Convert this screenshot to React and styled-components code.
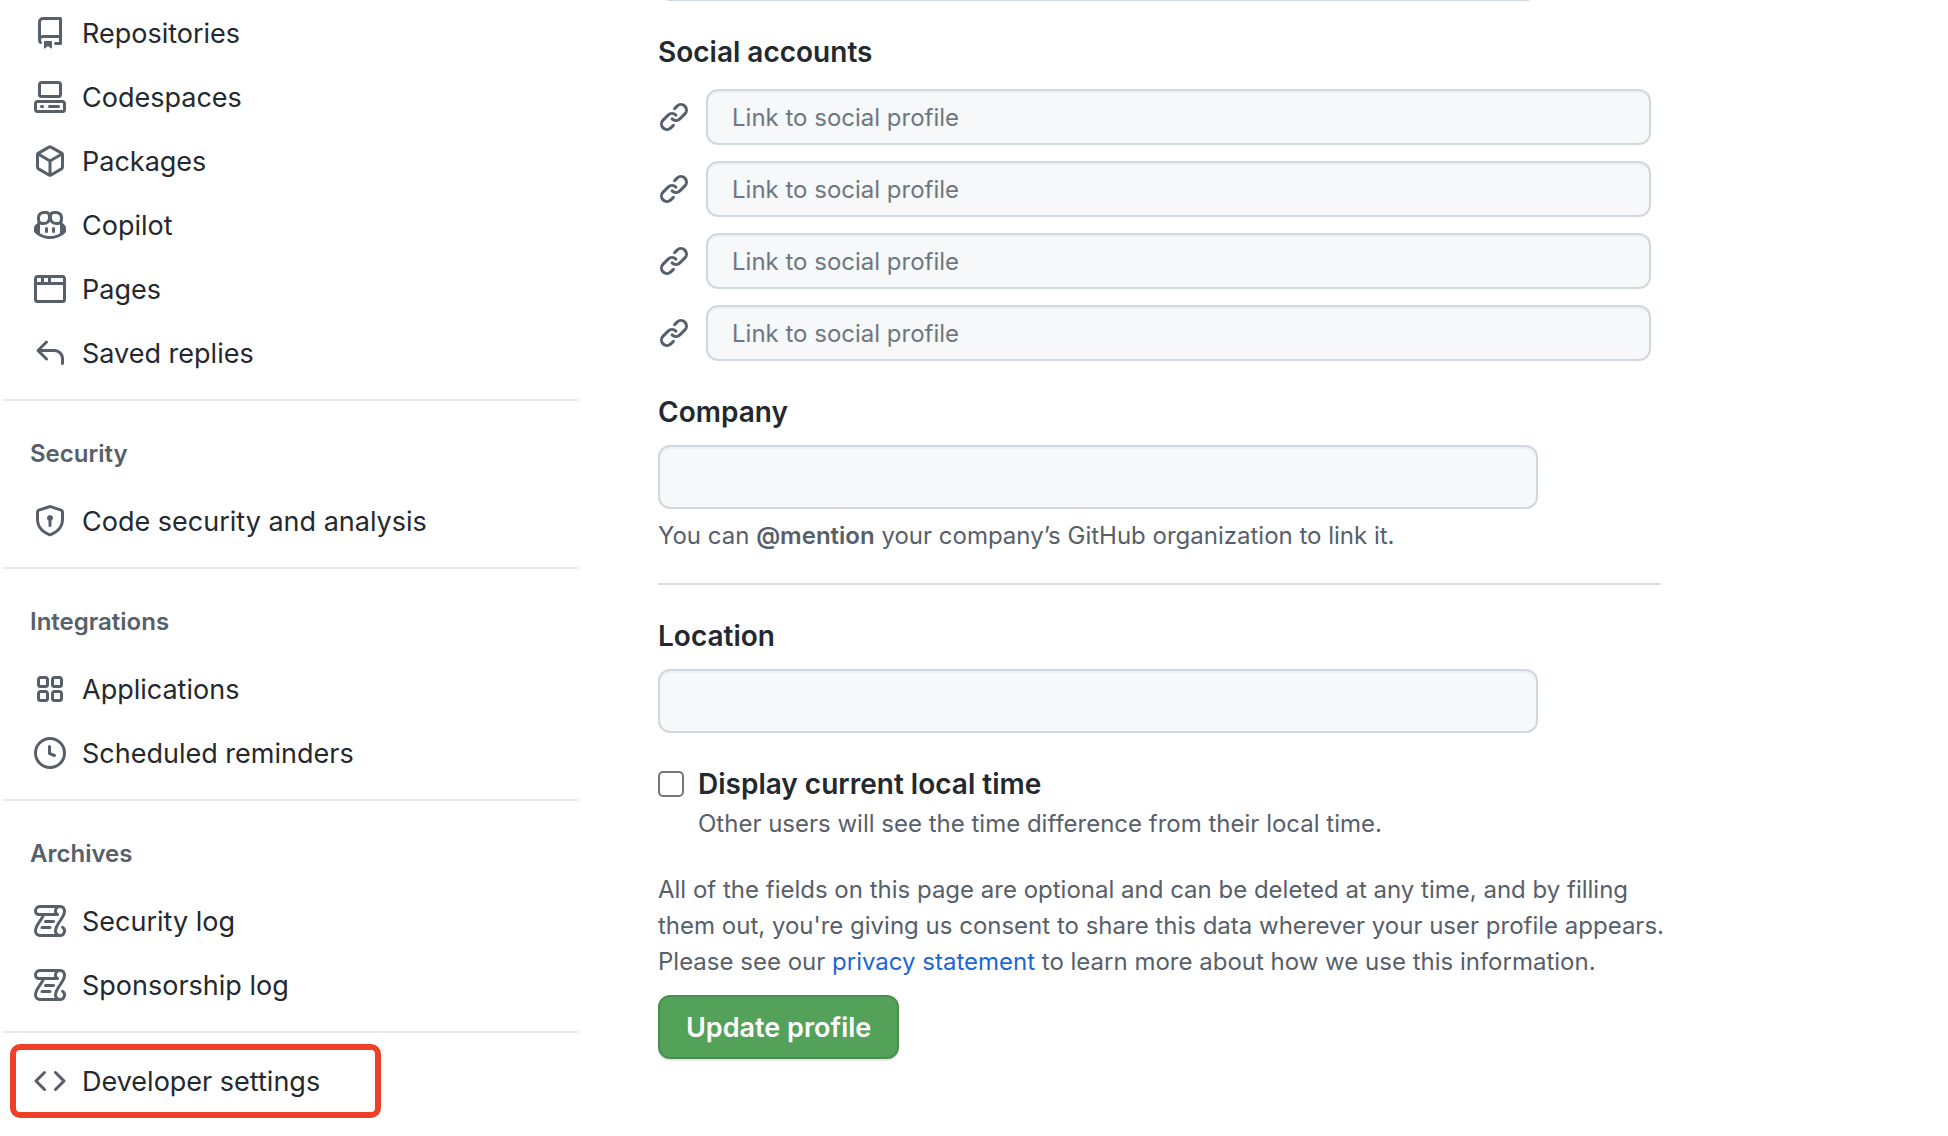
import React, { useId } from "react";
import styled, { createGlobalStyle, css } from "styled-components";

const color = {
  text: "#24292f",
  muted: "#57606a",
  placeholder: "#6e7781",
  link: "#1a66d8",
  border: "#d0d7de",
  divider: "#d8dee4",
  navDivider: "#e8ebef",
  field: "#f6f8fa",
  highlight: "#ee4026",
};

const GlobalStyle = createGlobalStyle`
  *, *::before, *::after { box-sizing: border-box; }
  body {
    margin: 0;
    overflow: hidden;
    background: #ffffff;
    color: ${color.text};
    font-family: Inter, "Liberation Sans", sans-serif;
    font-size: 27px;
    line-height: 40px;
  }
`;

const icons = {
  repo: "M2 2.5A2.5 2.5 0 0 1 4.5 0h8.75a.75.75 0 0 1 .75.75v12.5a.75.75 0 0 1-.75.75h-2.5a.75.75 0 0 1 0-1.5h1.75v-2h-8a1 1 0 0 0-.714 1.7.75.75 0 1 1-1.072 1.05A2.495 2.495 0 0 1 2 11.5Zm10.5-1h-8a1 1 0 0 0-1 1v6.708A2.486 2.486 0 0 1 4.5 9h8ZM5 12.25a.25.25 0 0 1 .25-.25h3.5a.25.25 0 0 1 .25.25v3.25a.25.25 0 0 1-.4.2l-1.45-1.087a.249.249 0 0 0-.3 0L5.4 15.7a.25.25 0 0 1-.4-.2Z",
  codespaces: "M0 11.25c0-.966.784-1.75 1.75-1.75h12.5c.966 0 1.75.784 1.75 1.75v3A1.75 1.75 0 0 1 14.25 16H1.75A1.75 1.75 0 0 1 0 14.25Zm2-9.5C2 .784 2.784 0 3.75 0h8.5C13.216 0 14 .784 14 1.75v5a1.75 1.75 0 0 1-1.75 1.75h-8.5A1.75 1.75 0 0 1 2 6.75Zm1.75-.25a.25.25 0 0 0-.25.25v5c0 .138.112.25.25.25h8.5a.25.25 0 0 0 .25-.25v-5a.25.25 0 0 0-.25-.25Zm-2 9.5a.25.25 0 0 0-.25.25v3c0 .138.112.25.25.25h12.5a.25.25 0 0 0 .25-.25v-3a.25.25 0 0 0-.25-.25ZM7 12.75a.75.75 0 0 1 .75-.75h4.5a.75.75 0 0 1 0 1.5h-4.5a.75.75 0 0 1-.75-.75Zm-4 0a.75.75 0 0 1 .75-.75h.5a.75.75 0 0 1 0 1.5h-.5a.75.75 0 0 1-.75-.75Z",
  package: "m8.878.392 5.25 3.045c.54.314.872.89.872 1.514v6.098a1.75 1.75 0 0 1-.872 1.514l-5.25 3.045a1.75 1.75 0 0 1-1.756 0l-5.25-3.045A1.75 1.75 0 0 1 1 11.049V4.951c0-.624.332-1.201.872-1.514L7.122.392a1.75 1.75 0 0 1 1.756 0ZM7.875 1.69l-4.63 2.685L8 7.133l4.755-2.758-4.63-2.685a.248.248 0 0 0-.25 0ZM2.5 5.677v5.372c0 .09.047.171.125.216l4.625 2.683V8.432Zm6.25 8.271 4.625-2.683a.25.25 0 0 0 .125-.216V5.677L8.75 8.432Z",
  copilot: "M7.998 15.035c-4.562 0-7.873-2.914-7.998-3.749V9.338c.085-.628.677-1.686 1.588-2.065.013-.07.024-.143.036-.218.029-.183.06-.384.126-.612-.201-.508-.254-1.084-.254-1.656 0-.87.128-1.769.693-2.484.579-.733 1.494-1.124 2.724-1.261 1.206-.134 2.262.034 2.944.765.05.053.096.108.139.165.044-.057.094-.112.143-.165.682-.731 1.738-.899 2.944-.765 1.23.137 2.145.528 2.724 1.261.566.715.693 1.614.693 2.484 0 .572-.053 1.148-.254 1.656.066.228.098.429.126.612.012.076.024.148.037.218.924.385 1.522 1.471 1.591 2.095v1.872c0 .766-3.351 3.795-8.002 3.795Zm0-1.485c2.28 0 4.584-1.11 5.002-1.433V7.862l-.023-.116c-.49.21-1.075.291-1.727.291-1.146 0-2.059-.327-2.71-.991A3.222 3.222 0 0 1 8 6.303a3.24 3.24 0 0 1-.544.743c-.65.664-1.563.991-2.71.991-.652 0-1.236-.081-1.727-.291l-.023.116v4.255c.419.323 2.722 1.433 5.002 1.433ZM6.762 2.83c-.193-.206-.637-.413-1.682-.297-1.019.113-1.479.404-1.713.7-.247.312-.369.789-.369 1.554 0 .793.129 1.171.308 1.371.162.181.519.379 1.442.379.853 0 1.339-.235 1.638-.54.315-.322.527-.827.617-1.553.117-.935-.037-1.395-.241-1.614Zm4.155-.297c-1.044-.116-1.488.091-1.681.297-.204.219-.359.679-.242 1.614.091.726.303 1.231.618 1.553.299.305.784.54 1.638.54.922 0 1.28-.198 1.442-.379.179-.2.308-.578.308-1.371 0-.765-.123-1.242-.37-1.554-.233-.296-.693-.587-1.713-.7ZM6.25 9.037a.75.75 0 0 1 .75.75v1.501a.75.75 0 0 1-1.5 0V9.787a.75.75 0 0 1 .75-.75Zm4.25.75v1.501a.75.75 0 0 1-1.5 0V9.787a.75.75 0 0 1 1.5 0Z",
  browser: "M0 2.75C0 1.784.784 1 1.75 1h12.5c.966 0 1.75.784 1.75 1.75v10.5A1.75 1.75 0 0 1 14.25 15H1.75A1.75 1.75 0 0 1 0 13.25ZM14.5 6h-13v7.25c0 .138.112.25.25.25h12.5a.25.25 0 0 0 .25-.25Zm-6-3.5v2h6V2.75a.25.25 0 0 0-.25-.25ZM5 2.5v2h2v-2Zm-3.25 0a.25.25 0 0 0-.25.25V4.5h2v-2Z",
  reply: "M6.78 1.97a.75.75 0 0 1 0 1.06L3.81 6h6.44A4.75 4.75 0 0 1 15 10.75v2.5a.75.75 0 0 1-1.5 0v-2.5a3.25 3.25 0 0 0-3.25-3.25H3.81l2.97 2.97a.749.749 0 0 1-.326 1.275.749.749 0 0 1-.734-.215L1.47 7.28a.75.75 0 0 1 0-1.06l4.25-4.25a.75.75 0 0 1 1.06 0Z",
  shield: "m8.533.133 5.25 1.68A1.75 1.75 0 0 1 15 3.48V7c0 1.566-.32 3.182-1.303 4.682-.983 1.498-2.585 2.813-5.032 3.855a1.697 1.697 0 0 1-1.33 0c-2.447-1.042-4.049-2.357-5.032-3.855C1.32 10.182 1 8.566 1 7V3.48a1.755 1.755 0 0 1 1.217-1.667l5.25-1.68a1.748 1.748 0 0 1 1.066 0Zm-.61 1.429.001.001-5.25 1.68a.251.251 0 0 0-.174.237V7c0 1.36.275 2.666 1.057 3.859.784 1.194 2.121 2.342 4.366 3.298a.196.196 0 0 0 .154 0c2.245-.957 3.582-2.103 4.366-3.297C13.225 9.666 13.5 8.358 13.5 7V3.48a.25.25 0 0 0-.174-.238l-5.25-1.68a.25.25 0 0 0-.153 0ZM9.5 6.5c0 .536-.286 1.032-.75 1.3v2.45a.75.75 0 0 1-1.5 0V7.8A1.5 1.5 0 1 1 9.5 6.5Z",
  apps: "M1.5 3.25c0-.966.784-1.75 1.75-1.75h2.5c.966 0 1.75.784 1.75 1.75v2.5A1.75 1.75 0 0 1 5.75 7.5h-2.5A1.75 1.75 0 0 1 1.5 5.75Zm7 0c0-.966.784-1.75 1.75-1.75h2.5c.966 0 1.75.784 1.75 1.75v2.5a1.75 1.75 0 0 1-1.75 1.75h-2.5A1.75 1.75 0 0 1 8.5 5.75Zm-7 7c0-.966.784-1.75 1.75-1.75h2.5c.966 0 1.75.784 1.75 1.75v2.5a1.75 1.75 0 0 1-1.75 1.75h-2.5a1.75 1.75 0 0 1-1.75-1.75Zm7 0c0-.966.784-1.75 1.75-1.75h2.5c.966 0 1.75.784 1.75 1.75v2.5a1.75 1.75 0 0 1-1.75 1.75h-2.5a1.75 1.75 0 0 1-1.75-1.75ZM3.25 3a.25.25 0 0 0-.25.25v2.5c0 .138.112.25.25.25h2.5A.25.25 0 0 0 6 5.75v-2.5A.25.25 0 0 0 5.75 3Zm7 0a.25.25 0 0 0-.25.25v2.5c0 .138.112.25.25.25h2.5a.25.25 0 0 0 .25-.25v-2.5a.25.25 0 0 0-.25-.25Zm-7 7a.25.25 0 0 0-.25.25v2.5c0 .138.112.25.25.25h2.5a.25.25 0 0 0 .25-.25v-2.5a.25.25 0 0 0-.25-.25Zm7 0a.25.25 0 0 0-.25.25v2.5c0 .138.112.25.25.25h2.5a.25.25 0 0 0 .25-.25v-2.5a.25.25 0 0 0-.25-.25Z",
  clock: "M8 0a8 8 0 1 1 0 16A8 8 0 0 1 8 0ZM1.5 8a6.5 6.5 0 1 0 13 0 6.5 6.5 0 0 0-13 0Zm7-3.25v2.992l2.028.812a.75.75 0 0 1-.557 1.392l-2.5-1A.751.751 0 0 1 7 8.25v-3.5a.75.75 0 0 1 1.5 0Z",
  log: "M5 8.25a.75.75 0 0 1 .75-.75h4a.75.75 0 0 1 0 1.5h-4A.75.75 0 0 1 5 8.25ZM4 10.5A.75.75 0 0 0 4 12h4a.75.75 0 0 0 0-1.5H4ZM13-.005c1.654 0 3 1.328 3 3 0 .982-.338 1.933-.783 2.818-.443.879-1.028 1.758-1.582 2.588l-.011.017c-.568.853-1.104 1.659-1.501 2.446-.398.789-.623 1.494-.623 2.136a1.5 1.5 0 1 0 2.333-1.248.75.75 0 0 1 .834-1.246A3 3 0 0 1 13 16H3a3 3 0 0 1-3-3c0-1.582.891-3.135 1.777-4.506.209-.322.418-.637.623-.946.473-.709.923-1.386 1.287-2.048H2.51c-.576 0-1.381-.133-1.907-.783A2.68 2.68 0 0 1 0 2.995a3 3 0 0 1 3-3Zm0 1.5a1.5 1.5 0 0 0-1.5 1.5c0 .476.223.834.667 1.132A.75.75 0 0 1 11.75 5.5H5.368c-.467 1.003-1.141 2.015-1.773 2.963-.192.289-.381.571-.558.845C2.13 10.711 1.5 11.916 1.5 13A1.5 1.5 0 0 0 3 14.5h7.401A2.989 2.989 0 0 1 10 13c0-.979.338-1.928.784-2.812.441-.874 1.023-1.748 1.575-2.576l.017-.026c.568-.853 1.103-1.658 1.501-2.448.398-.79.623-1.497.623-2.143 0-.838-.669-1.5-1.5-1.5Zm-10 0a1.5 1.5 0 0 0-1.5 1.5c0 .321.1.569.27.778.097.12.325.227.74.227h7.674A2.737 2.737 0 0 1 10 2.995c0-.546.146-1.059.401-1.5Z",
  code: "m11.28 3.22 4.25 4.25a.75.75 0 0 1 0 1.06l-4.25 4.25a.749.749 0 0 1-1.275-.326.749.749 0 0 1 .215-.734L13.94 8l-3.72-3.72a.749.749 0 0 1 .326-1.275.749.749 0 0 1 .734.215Zm-6.56 0a.751.751 0 0 1 1.042.018.751.751 0 0 1 .018 1.042L2.06 8l3.72 3.72a.749.749 0 0 1-.326 1.275.749.749 0 0 1-.734-.215L.47 8.53a.75.75 0 0 1 0-1.06Z",
  link: "m7.775 3.275 1.25-1.25a3.5 3.5 0 1 1 4.95 4.95l-2.5 2.5a3.5 3.5 0 0 1-4.95 0 .751.751 0 0 1 .018-1.042.751.751 0 0 1 1.042-.018 1.998 1.998 0 0 0 2.83 0l2.5-2.5a2.002 2.002 0 0 0-2.83-2.83l-1.25 1.25a.751.751 0 0 1-1.042-.018.751.751 0 0 1-.018-1.042Zm-4.69 9.64a1.998 1.998 0 0 0 2.83 0l1.25-1.25a.751.751 0 0 1 1.042.018.751.751 0 0 1 .018 1.042l-1.25 1.25a3.5 3.5 0 1 1-4.95-4.95l2.5-2.5a3.5 3.5 0 0 1 4.95 0 .751.751 0 0 1-.018 1.042.751.751 0 0 1-1.042.018 1.998 1.998 0 0 0-2.83 0l-2.5 2.5a1.998 1.998 0 0 0 0 2.83Z",
};

const Svg = styled.svg`
  flex: none;
  width: 32px;
  height: 32px;
  fill: ${color.muted};
`;

function Icon({ name }) {
  return (
    <Svg viewBox="0 0 16 16" aria-hidden="true">
      <path fillRule="evenodd" d={icons[name]} />
    </Svg>
  );
}

const Page = styled.div`
  display: grid;
  grid-template-columns: 576px minmax(0, 1003px);
  column-gap: 80px;
  padding-left: 2px;
`;

const Sidebar = styled.nav`
  padding-top: 1px;
`;

const Group = styled.section`
  padding-bottom: 14px;
  border-bottom: 2px solid ${color.navDivider};
`;

const GroupTitle = styled.h3`
  margin: 0;
  padding: 35px 28px 17px;
  color: ${color.muted};
  font-size: 24px;
  font-weight: 600;
  line-height: 36px;
`;

const List = styled.ul`
  margin: 0;
  padding: 0;
  list-style: none;
`;

const NavLink = styled.a`
  display: flex;
  align-items: center;
  gap: 16px;
  height: 64px;
  padding: 0 32px;
  color: ${color.text};
  text-decoration: none;

  ${({ $highlighted }) =>
    $highlighted &&
    css`
      width: fit-content;
      height: 74px;
      margin: 11px 8px;
      padding: 0 55px 0 18px;
      border: 6px solid ${color.highlight};
      border-radius: 10px;
    `}
`;

const NavText = styled.span`
  padding-top: 2px;
`;

const Main = styled.main`
  display: flex;
  flex-direction: column;
  align-items: flex-start;
`;

const fieldStyle = css`
  border: 2px solid ${color.border};
  border-radius: 12px;
  background: ${color.field};
  box-shadow: inset 0 2px 0 rgba(208, 215, 222, 0.2);
  color: ${color.text};
  font-family: inherit;
  outline: none;
`;

const TextInput = styled.input`
  ${fieldStyle}
  width: 100%;
  max-width: 880px;
  height: 64px;
  padding: 0 24px;
  font-size: 27px;
`;

const UrlInput = styled(TextInput)`
  margin-top: -63px;
`;

const SocialInput = styled.input`
  ${fieldStyle}
  flex: 1;
  min-width: 0;
  height: 56px;
  padding: 0 24px;
  font-size: 24px;

  &::placeholder {
    color: ${color.placeholder};
    opacity: 1;
  }
`;

const SocialSet = styled.fieldset`
  display: flex;
  flex-direction: column;
  gap: 16px;
  align-self: stretch;
  min-width: 0;
  margin: 0;
  padding: 0 10px 0 0;
  border: 0;
`;

const fieldTitle = css`
  display: block;
  font-size: 28px;
  font-weight: 600;
  line-height: 40px;
`;

const Legend = styled.legend`
  ${fieldTitle}
  padding: 31px 0 17px;
`;

const SocialRow = styled.label`
  display: flex;
  align-items: center;
  gap: 16px;
`;

const Label = styled.label`
  ${fieldTitle}
  padding: 31px 0 13px;
`;

const Hint = styled.p`
  margin: 0;
  color: ${color.muted};
  font-size: 24px;
  line-height: 36px;
`;

const FieldHint = styled(Hint)`
  padding: 9px 0 29px;
`;

const Mention = styled.strong`
  font-weight: 600;
`;

const Rule = styled.hr`
  align-self: stretch;
  height: 2px;
  margin: 0;
  border: 0;
  background: ${color.divider};
`;

const CheckRow = styled.div`
  display: grid;
  grid-template-columns: 26px auto;
  align-items: center;
  column-gap: 14px;
  row-gap: 2px;
  padding-top: 31px;
`;

const Checkbox = styled.input`
  appearance: none;
  width: 26px;
  height: 26px;
  margin: 0;
  border: 2px solid #767676;
  border-radius: 5px;
  background: #ffffff;
`;

const CheckLabel = styled.label`
  ${fieldTitle}
`;

const CheckHint = styled(Hint)`
  grid-column: 2;
`;

const Consent = styled(Hint)`
  margin-right: -16px;
  padding: 30px 0 15px;
`;

const Link = styled.a`
  color: ${color.link};
  text-decoration: none;
`;

const SubmitButton = styled.button`
  height: 64px;
  padding: 0 26px;
  border: 2px solid #4a8f50;
  border-radius: 12px;
  background: #54a159;
  box-shadow: 0 2px 0 rgba(27, 31, 36, 0.1);
  color: #ffffff;
  font-family: inherit;
  font-size: 27px;
  font-weight: 600;
`;

const groups = [
  {
    items: [
      ["repo", "Repositories"],
      ["codespaces", "Codespaces"],
      ["package", "Packages"],
      ["copilot", "Copilot"],
      ["browser", "Pages"],
      ["reply", "Saved replies"],
    ],
  },
  { title: "Security", items: [["shield", "Code security and analysis"]] },
  {
    title: "Integrations",
    items: [
      ["apps", "Applications"],
      ["clock", "Scheduled reminders"],
    ],
  },
  {
    title: "Archives",
    items: [
      ["log", "Security log"],
      ["log", "Sponsorship log"],
    ],
  },
];

function NavItem({ icon, children, highlighted }) {
  return (
    <NavLink href="#" $highlighted={highlighted}>
      <Icon name={icon} />
      <NavText>{children}</NavText>
    </NavLink>
  );
}

export default function App() {
  const id = useId();
  return (
    <>
      <GlobalStyle />
      <Page>
        <Sidebar aria-label="Settings">
          {groups.map((group, index) => (
            <Group key={index}>
              {group.title && <GroupTitle>{group.title}</GroupTitle>}
              <List>
                {group.items.map(([icon, label]) => (
                  <li key={label}>
                    <NavItem icon={icon}>{label}</NavItem>
                  </li>
                ))}
              </List>
            </Group>
          ))}
          <NavItem icon="code" highlighted>
            Developer settings
          </NavItem>
        </Sidebar>

        <Main>
          <UrlInput type="text" aria-label="URL" />

          <SocialSet>
            <Legend>Social accounts</Legend>
            {[1, 2, 3, 4].map((n) => (
              <SocialRow key={n}>
                <Icon name="link" />
                <SocialInput
                  type="text"
                  aria-label={`Social account ${n}`}
                  placeholder="Link to social profile"
                />
              </SocialRow>
            ))}
          </SocialSet>

          <Label htmlFor={`${id}-company`}>Company</Label>
          <TextInput id={`${id}-company`} type="text" />
          <FieldHint>
            You can <Mention>@mention</Mention> your company’s GitHub organization to link it.
          </FieldHint>
          <Rule />

          <Label htmlFor={`${id}-location`}>Location</Label>
          <TextInput id={`${id}-location`} type="text" />

          <CheckRow>
            <Checkbox id={`${id}-time`} type="checkbox" />
            <CheckLabel htmlFor={`${id}-time`}>Display current local time</CheckLabel>
            <CheckHint>
              Other users will see the time difference from their local time.
            </CheckHint>
          </CheckRow>

          <Consent>
            All of the fields on this page are optional and can be deleted at any time, and by
            filling them out, you're giving us consent to share this data wherever your user
            profile appears. Please see our <Link href="#">privacy statement</Link> to learn more
            about how we use this information.
          </Consent>
          <SubmitButton type="button">Update profile</SubmitButton>
        </Main>
      </Page>
    </>
  );
}
